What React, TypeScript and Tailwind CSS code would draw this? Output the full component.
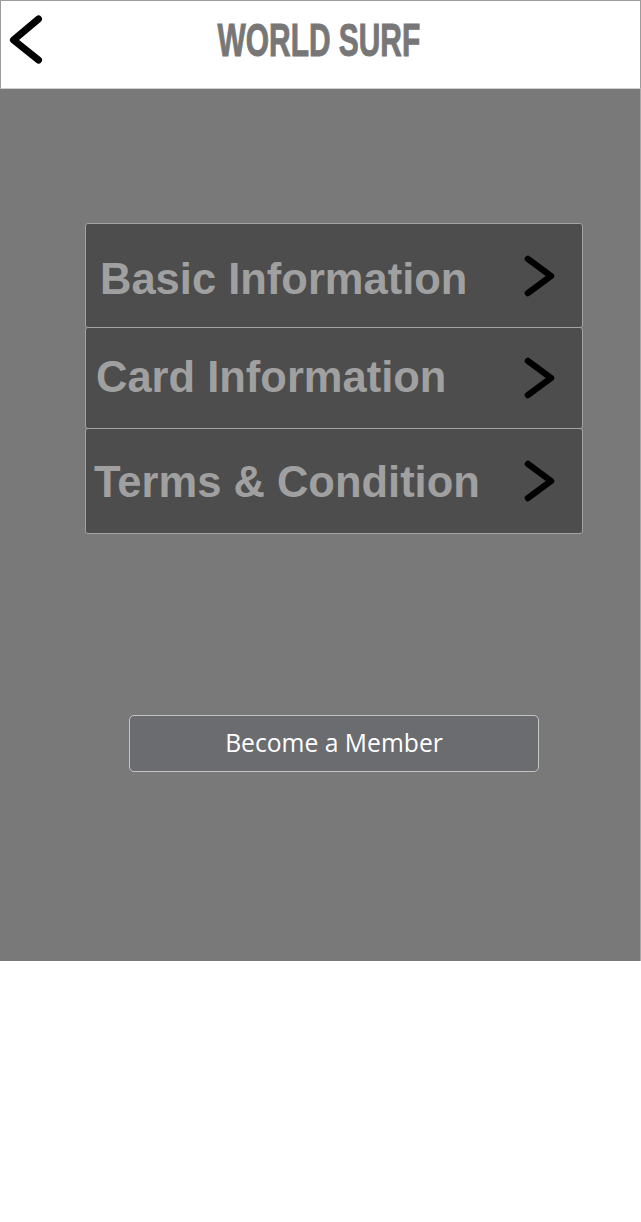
import React from "react";

const rows = [
  { label: "Basic Information", h: "h-[105px]", pad: "pl-[14px] pt-[9px]" },
  { label: "Card Information", h: "h-[102px] -mt-px", pad: "pl-[10px]" },
  { label: "Terms & Condition", h: "h-[106px] -mt-px", pad: "pl-[8px] pt-[3px]" },
];

function Chevron() {
  return (
    <svg width="36" height="44" viewBox="0 0 36 44" className="mr-[24px] shrink-0">
      <polyline
        points="6,5 29,22 6,39"
        fill="none"
        stroke="#000"
        strokeWidth="6.5"
        strokeLinecap="round"
        strokeLinejoin="round"
      />
    </svg>
  );
}

export default function App() {
  return (
    <div className="w-[641px] h-[1222px] bg-white">
      {/* Header */}
      <div className="h-[89px] border border-[#9c9c9c] border-b-[#d0d0d0] bg-white grid grid-cols-[1fr_auto_1fr] items-center pb-[10px] pr-[3px]">
        <div className="flex items-center">
          <svg width="42" height="50" viewBox="0 0 42 50" className="ml-[3px]">
            <polyline
              points="34.5,4 9.5,25 34.5,45"
              fill="none"
              stroke="#000"
              strokeWidth="7"
              strokeLinecap="round"
              strokeLinejoin="round"
            />
          </svg>
        </div>
        <div className="flex justify-center w-[202px]">
          <span className="inline-block whitespace-nowrap scale-x-[0.65] font-['Liberation_Sans',Arial,sans-serif] font-bold text-[46px] leading-none text-[#777777] [-webkit-text-stroke:1px_#777777]">
            WORLD SURF
          </span>
        </div>
        <div />
      </div>

      {/* Body */}
      <div className="h-[872px] bg-[#797979] border-r border-[#a8a8a8] pt-[134px]">
        <div className="ml-[85px] w-[498px] flex flex-col">
          {rows.map((r) => (
            <div
              key={r.label}
              className={`${r.h} bg-[#4d4d4d] border border-[#a3a3a3] rounded-[3px] flex items-center`}
            >
              <span
                className={`${r.pad} flex-1 font-['Liberation_Sans',Arial,sans-serif] font-bold text-[43.5px] leading-none text-[#a0a0a0] whitespace-nowrap`}
              >
                {r.label}
              </span>
              <Chevron />
            </div>
          ))}
        </div>

        <div className="mt-[181px] ml-[129px] w-[410px] h-[57px] bg-[#6b6c70] border border-[#c4c4c4] rounded-[5px] flex items-center justify-center">
          <span className="font-['Open_Sans',sans-serif] text-[24.7px] leading-none text-white">
            Become a Member
          </span>
        </div>
      </div>
    </div>
  );
}
